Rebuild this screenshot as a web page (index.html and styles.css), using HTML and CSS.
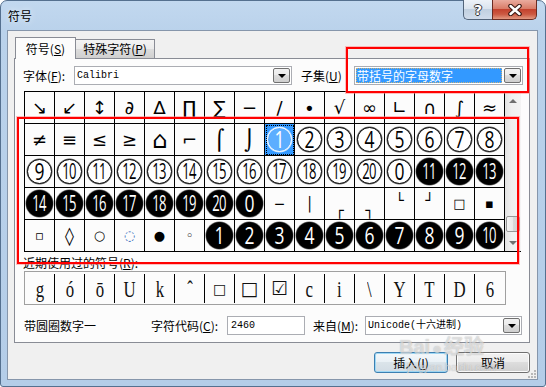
FILE: index.html
```html
<!DOCTYPE html>
<html lang="zh-CN">
<head>
  <meta charset="UTF-8">
  <title>符号</title>
  <link rel="stylesheet" href="styles.css">
</head>
<body>
  <div class="window">
    <div class="titlebar">
      <div class="title">符号</div>
      <div class="caption-buttons">
        <div class="cap-btn help">?</div>
        <div class="cap-btn close">
          <svg width="16" height="12" viewBox="0 0 16 12"><path d="M3.5 2 L12.5 10 M12.5 2 L3.5 10" stroke="#3b1a14" stroke-width="4.6" stroke-linecap="round"/><path d="M3.5 2 L12.5 10 M12.5 2 L3.5 10" stroke="#fff" stroke-width="2.4" stroke-linecap="round"/></svg>
        </div>
      </div>
    </div>

    <div class="client">
      <div class="tabs">
        <div class="tab active">符号(<u>S</u>)</div>
        <div class="tab">特殊字符(<u>P</u>)</div>
      </div>

      <div class="panel">
        <div class="font-row">
          <span class="label font-label">字体(<u>F</u>):</span>
          <div class="combo font-combo"><span class="val mono">Calibri</span><span class="drop"><i></i></span></div>
          <span class="label subset-label">子集(<u>U</u>)</span>
          <div class="combo subset-combo"><span class="val sel">带括号的字母数字</span><span class="drop"><i></i></span></div>
        </div>

        <div class="chart">
          <div class="grid">
            <div class="cell">↘</div><div class="cell">↙</div><div class="cell">↕</div><div class="cell">∂</div>
            <div class="cell">∆</div><div class="cell">∏</div><div class="cell">∑</div><div class="cell">−</div>
            <div class="cell">∕</div><div class="cell">∙</div><div class="cell">√</div><div class="cell">∞</div>
            <div class="cell">∟</div><div class="cell">∩</div><div class="cell">∫</div><div class="cell">≈</div>

            <div class="cell">≠</div><div class="cell">≡</div><div class="cell">≤</div><div class="cell">≥</div>
            <div class="cell house">⌂</div><div class="cell">⌐</div><div class="cell tall">⌠</div><div class="cell tall">⌡</div>
            <div class="cell selected"><span class="circ on"><b>1</b></span></div>
            <div class="cell"><span class="circ"><b>2</b></span></div>
            <div class="cell"><span class="circ"><b>3</b></span></div>
            <div class="cell"><span class="circ"><b>4</b></span></div>
            <div class="cell"><span class="circ"><b>5</b></span></div>
            <div class="cell"><span class="circ"><b>6</b></span></div>
            <div class="cell"><span class="circ"><b>7</b></span></div>
            <div class="cell"><span class="circ"><b>8</b></span></div>

            <div class="cell"><span class="circ"><b>9</b></span></div>
            <div class="cell"><span class="circ two"><b>10</b></span></div>
            <div class="cell"><span class="circ two"><b>11</b></span></div>
            <div class="cell"><span class="circ two"><b>12</b></span></div>
            <div class="cell"><span class="circ two"><b>13</b></span></div>
            <div class="cell"><span class="circ two"><b>14</b></span></div>
            <div class="cell"><span class="circ two"><b>15</b></span></div>
            <div class="cell"><span class="circ two"><b>16</b></span></div>
            <div class="cell"><span class="circ two"><b>17</b></span></div>
            <div class="cell"><span class="circ two"><b>18</b></span></div>
            <div class="cell"><span class="circ two"><b>19</b></span></div>
            <div class="cell"><span class="circ two"><b>20</b></span></div>
            <div class="cell"><span class="circ"><b>0</b></span></div>
            <div class="cell"><span class="circ neg two"><b>11</b></span></div>
            <div class="cell"><span class="circ neg two"><b>12</b></span></div>
            <div class="cell"><span class="circ neg two"><b>13</b></span></div>

            <div class="cell"><span class="circ neg two"><b>14</b></span></div>
            <div class="cell"><span class="circ neg two"><b>15</b></span></div>
            <div class="cell"><span class="circ neg two"><b>16</b></span></div>
            <div class="cell"><span class="circ neg two"><b>17</b></span></div>
            <div class="cell"><span class="circ neg two"><b>18</b></span></div>
            <div class="cell"><span class="circ neg two"><b>19</b></span></div>
            <div class="cell"><span class="circ neg two"><b>20</b></span></div>
            <div class="cell"><span class="circ neg"><b>0</b></span></div>
            <div class="cell box">─</div><div class="cell box">│</div>
            <div class="cell box lo">┌</div><div class="cell box lo">┐</div>
            <div class="cell box hi">└</div><div class="cell box hi">┘</div>
            <div class="cell small">□</div><div class="cell small">▪</div>

            <div class="cell small">▫</div><div class="cell">◊</div><div class="cell small">○</div>
            <div class="cell small dotted">◌</div><div class="cell small">●</div><div class="cell small">◦</div>
            <div class="cell"><span class="circ neg"><b>1</b></span></div>
            <div class="cell"><span class="circ neg"><b>2</b></span></div>
            <div class="cell"><span class="circ neg"><b>3</b></span></div>
            <div class="cell"><span class="circ neg"><b>4</b></span></div>
            <div class="cell"><span class="circ neg"><b>5</b></span></div>
            <div class="cell"><span class="circ neg"><b>6</b></span></div>
            <div class="cell"><span class="circ neg"><b>7</b></span></div>
            <div class="cell"><span class="circ neg"><b>8</b></span></div>
            <div class="cell"><span class="circ neg"><b>9</b></span></div>
            <div class="cell"><span class="circ neg two"><b>10</b></span></div>
          </div>
          <div class="scrollbar">
            <div class="sb-arrow up"><i></i></div>
            <div class="sb-track"><div class="sb-thumb"></div></div>
            <div class="sb-arrow down"><i></i></div>
          </div>
        </div>

        <div class="recent-label">近期使用过的符号(<u>R</u>):</div>
        <div class="recent">
          <div class="rc"><span>g</span></div>
          <div class="rc"><span>ó</span></div>
          <div class="rc"><span>ō</span></div>
          <div class="rc"><span>U</span></div>
          <div class="rc"><span>k</span></div>
          <div class="rc"><span>ˆ</span></div>
          <div class="rc sym-s"><span>□</span></div>
          <div class="rc sym-l"><span>□</span></div>
          <div class="rc sym-l"><span>☑</span></div>
          <div class="rc"><span>c</span></div>
          <div class="rc"><span>i</span></div>
          <div class="rc"><span>\</span></div>
          <div class="rc"><span>Y</span></div>
          <div class="rc"><span>T</span></div>
          <div class="rc"><span>D</span></div>
          <div class="rc"><span>6</span></div>
        </div>

        <div class="info-row">
          <span class="char-name">带圆圈数字一</span>
          <span class="label code-label">字符代码(<u>C</u>):</span>
          <div class="edit mono">2460</div>
          <span class="label from-label">来自(<u>M</u>):</span>
          <div class="combo from-combo"><span class="val mono">Unicode(十六进制)</span><span class="drop"><i></i></span></div>
        </div>
      </div>

      <div class="buttons">
        <button class="btn default">插入(<u>I</u>)</button>
        <button class="btn">取消</button>
      </div>

      <svg class="grip" width="10" height="10" viewBox="0 0 10 10">
        <rect x="7" y="1" width="2" height="2" fill="#b8b8b8"/>
        <rect x="4" y="4" width="2" height="2" fill="#b8b8b8"/>
        <rect x="7" y="4" width="2" height="2" fill="#b8b8b8"/>
        <rect x="1" y="7" width="2" height="2" fill="#b8b8b8"/>
        <rect x="4" y="7" width="2" height="2" fill="#b8b8b8"/>
        <rect x="7" y="7" width="2" height="2" fill="#b8b8b8"/>
      </svg>
    </div>

    <div class="watermark">
      <div class="wm-logo">Bai<span class="paw">●</span>经验</div>
      <div class="wm-url">jingyan.baidu.com</div>
    </div>

    <div class="mark mark-subset"></div>
    <div class="mark mark-grid"></div>
  </div>
</body>
</html>
```

FILE: styles.css
```css
* {
  margin: 0;
  padding: 0;
  box-sizing: border-box;
}
body {
  width: 546px;
  height: 387px;
  overflow: hidden;
  background: #fff;
  font-family: "Noto Sans CJK SC", sans-serif;
  font-size: 12px;
  color: #000;
}
u {
  text-decoration: underline;
  text-underline-offset: 1px;
}
.mono {
  font-family: "Liberation Mono", "Noto Sans CJK SC", monospace;
  font-size: 10px;
}

/* window frame */
.window {
  position: relative;
  width: 546px;
  height: 387px;
  border: 1px solid #55708f;
  border-radius: 7px 7px 3px 3px;
  background: linear-gradient(#c2d8ef, #bad2eb 30px, #b4cde8);
  display: flex;
  flex-direction: column;
}
.titlebar {
  height: 29px;
  display: flex;
  justify-content: space-between;
  align-items: flex-start;
  padding: 0 8px 0 7px;
}
.title {
  padding-top: 7px;
  line-height: 16px;
  text-shadow: 0 0 6px rgba(255, 255, 255, 0.9);
}
.caption-buttons {
  display: flex;
  margin-top: -1px;
}
.cap-btn {
  height: 20px;
  display: flex;
  align-items: center;
  justify-content: center;
}
.help {
  width: 29px;
  border: 1px solid #52647a;
  border-top: none;
  border-right: none;
  border-radius: 0 0 0 5px;
  background: linear-gradient(#edf2f8, #dbe4ee 45%, #c1d0e0 50%, #d0dceb);
  color: #fff;
  font-family: "DejaVu Sans", sans-serif;
  font-weight: bold;
  font-size: 14px;
  text-shadow: 1px 0 0 #333, -1px 0 0 #333, 0 1px 0 #333, 0 -1px 0 #333;
}
.close {
  width: 45px;
  border: 1px solid #6b2b22;
  border-top: none;
  border-radius: 0 0 5px 0;
  background: linear-gradient(#eaab9e, #d97c68 45%, #c4422e 50%, #cc5942 75%, #e39a82);
}

/* client area */
.client {
  position: relative;
  flex: 1;
  margin: 0 7px 6px 6px;
  border: 1px solid #8696ab;
  background: #f0f0f0;
  padding: 6px 7px 0 6px;
  display: flex;
  flex-direction: column;
}
.tabs {
  height: 21px;
  display: flex;
  align-items: flex-end;
  padding-left: 1px;
}
.tab {
  height: 19px;
  padding: 0 2px;
  border: 1px solid #898c95;
  border-bottom: none;
  background: linear-gradient(#f3f3f3, #ebebeb 50%, #dddddd 50%, #cfcfcf);
  line-height: 18px;
  text-align: center;
  white-space: nowrap;
}
.tab.active {
  position: relative;
  z-index: 1;
  width: 61px;
  height: 22px;
  margin-bottom: -1px;
  background: #fcfcfc;
  line-height: 21px;
}
.tab + .tab {
  width: 79px;
  border-left: none;
}
.panel {
  height: 285px;
  border: 1px solid #898c95;
  background: #fcfcfc;
  padding: 7px 0 0 8px;
}

/* font row */
.font-row {
  display: flex;
  align-items: center;
  height: 19px;
}
.label {
  white-space: nowrap;
}
.font-label {
  width: 51px;
}
.subset-label {
  width: 53px;
  margin-left: 9px;
}
.combo {
  height: 19px;
  display: flex;
  border: 1px solid #abadb3;
  background: #fff;
}
.font-combo {
  width: 218px;
}
.subset-combo {
  width: 169px;
}
.combo .val {
  flex: 1;
  padding-left: 2px;
  line-height: 17px;
  white-space: nowrap;
  overflow: hidden;
}
.combo .val.sel {
  margin: 1px;
  padding-left: 1px;
  line-height: 15px;
  background: #3399ff;
  color: #fff;
  outline: 1px dotted #c9b27a;
  outline-offset: -1px;
}
.drop {
  width: 17px;
  margin: 1px;
  border: 1px solid #707070;
  border-radius: 2px;
  background: linear-gradient(#f2f2f2, #ebebeb 50%, #dddddd 50%, #cfcfcf);
  display: flex;
  align-items: center;
  justify-content: center;
}
.drop i {
  border-left: 4px solid transparent;
  border-right: 4px solid transparent;
  border-top: 4px solid #000;
}

/* character chart */
.chart {
  display: flex;
  margin: 6px 0 0 1px;
  border-top: 1px solid #000;
  border-left: 1px solid #000;
  width: 498px;
}
.grid {
  display: grid;
  grid-template-columns: repeat(16, 30px);
  grid-auto-rows: 32px;
}
.cell {
  display: flex;
  align-items: center;
  justify-content: center;
  border-right: 1px solid #000;
  border-bottom: 1px solid #000;
  font-family: "DejaVu Sans", sans-serif;
  font-size: 18px;
  line-height: 1;
  overflow: hidden;
}
.cell.tall {
  font-size: 20px;
}
.cell.house {
  font-size: 24px;
}
.cell.small {
  font-size: 13px;
}
.cell.dotted {
  color: #2a5fb8;
}
.cell.box {
  font-size: 14px;
}
.cell.lo {
  padding-top: 12px;
}
.cell.hi {
  padding-bottom: 8px;
}
.cell.selected {
  background: #3399ff;
  outline: 1px dotted #000;
  outline-offset: -2px;
}
.circ {
  width: 25px;
  height: 25px;
  border: 1px solid #000;
  border-radius: 50%;
  box-shadow: 0 0 0 0.5px rgba(0, 0, 0, 0.6);
  display: flex;
  align-items: center;
  justify-content: center;
  font-family: "Open Sans", sans-serif;
  font-size: 23px;
  line-height: 1;
  background: #fff;
}
.circ b {
  display: inline-block;
  font-weight: normal;
  transform: scaleX(0.76);
}
.circ.two b {
  font-size: 21px;
  letter-spacing: -1px;
  transform: scaleX(0.62);
}
.circ.neg {
  width: 27px;
  height: 27px;
  background: #000;
  color: #fff;
}
.circ.on {
  background: #5caeff;
  border-color: #fff;
  box-shadow: 0 0 0 0.5px rgba(255, 255, 255, 0.7);
  color: #fff;
}
.scrollbar {
  width: 16px;
  height: 160px;
  display: flex;
  flex-direction: column;
  border-bottom: 1px solid #000;
  background: linear-gradient(to right, #e3e3e3, #f0f0f0 40%, #f4f4f4);
}
.sb-arrow {
  height: 17px;
  display: flex;
  align-items: center;
  justify-content: center;
}
.sb-arrow i {
  border-left: 4px solid transparent;
  border-right: 4px solid transparent;
}
.sb-arrow.up i {
  border-bottom: 4px solid #707070;
}
.sb-arrow.down i {
  border-top: 4px solid #707070;
}
.sb-track {
  flex: 1;
  display: flex;
  flex-direction: column;
  justify-content: flex-end;
  padding-bottom: 2px;
}
.sb-thumb {
  height: 16px;
  margin: 0 1px;
  border: 1px solid #979797;
  border-radius: 2px;
  background: linear-gradient(to right, #f4f4f4, #e9e9e9 50%, #d9d9d9 50%, #d0d0d0);
}

/* recently used */
.recent-label {
  margin-top: 3px;
  line-height: 16px;
}
.recent {
  width: 482px;
  height: 34px;
  margin-left: 1px;
  border: 1px solid #a0a0a0;
  display: flex;
}
.rc {
  width: 30px;
  margin: 2px 0 1px;
  display: flex;
  align-items: center;
  justify-content: center;
  border-left: 1px solid #000;
  font-family: "Liberation Serif", "DejaVu Sans", serif;
  font-size: 24px;
  line-height: 1;
  color: #111;
}
.rc:first-child {
  border-left: none;
  width: 29px;
}
.rc span {
  display: inline-block;
  transform: scaleX(0.7);
}
.rc.sym-s {
  font-size: 14px;
}
.rc.sym-s span,
.rc.sym-l span {
  transform: none;
  font-family: "DejaVu Sans", sans-serif;
}
.rc.sym-l {
  font-size: 19px;
}

/* info row */
.info-row {
  display: flex;
  align-items: center;
  height: 19px;
  margin-top: 11px;
  padding-left: 1px;
}
.char-name {
  width: 127px;
}
.code-label {
  width: 76px;
}
.edit {
  width: 78px;
  height: 19px;
  border: 1px solid #abadb3;
  background: #fff;
  padding-left: 3px;
  line-height: 17px;
}
.from-label {
  width: 52px;
  margin-left: 8px;
}
.from-combo {
  width: 157px;
}

/* dialog buttons */
.buttons {
  display: flex;
  justify-content: flex-end;
  gap: 8px;
  margin-top: 9px;
}
.btn {
  width: 74px;
  height: 21px;
  border: 1px solid #707070;
  border-radius: 3px;
  background: linear-gradient(#f2f2f2, #ebebeb 49%, #dddddd 50%, #cfcfcf);
  box-shadow: inset 0 0 0 1px #fcfcfc;
  font-family: "Noto Sans CJK SC", sans-serif;
  font-size: 12px;
  color: #000;
}
.btn.default {
  border-color: #3c7fb1;
  box-shadow: inset 0 0 0 1px #9fd8f5;
  background: linear-gradient(#f4f8fb, #e9f0f5 49%, #dbe4ea 50%, #d2dce4);
}
.grip {
  position: absolute;
  right: 0;
  bottom: 0;
}

/* baidu watermark */
.watermark {
  position: absolute;
  left: 398px;
  top: 334px;
  color: rgba(255, 255, 255, 0.55);
  text-shadow: 0 0 1px rgba(90, 90, 90, 0.45);
  pointer-events: none;
}
.wm-logo {
  font-family: "Liberation Sans", sans-serif;
  font-weight: bold;
  font-size: 20px;
  line-height: 24px;
}
.wm-logo .paw {
  font-size: 16px;
  margin: 0 2px;
}
.wm-url {
  font-family: "Liberation Sans", sans-serif;
  font-size: 11px;
  line-height: 12px;
  padding-left: 8px;
}

/* red annotation boxes */
.mark {
  position: absolute;
  border: 2px solid #ff0000;
  box-shadow: 0 0 0 1px rgba(255, 130, 130, 0.5);
  pointer-events: none;
}
.mark-subset {
  left: 345px;
  top: 46px;
  width: 183px;
  height: 46px;
}
.mark-grid {
  left: 16px;
  top: 116px;
  width: 502px;
  height: 147px;
}
```
